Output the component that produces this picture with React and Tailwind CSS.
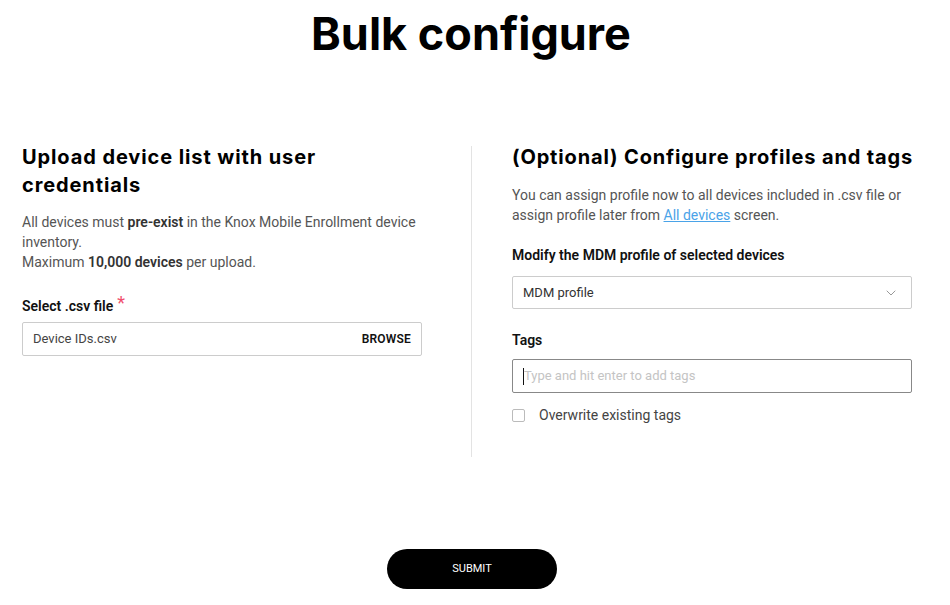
import { ChevronDown } from 'lucide-react';

const sharp = { fontFamily: '"Inter", "Lato", sans-serif' };

export default function App() {
  return (
    <div className="w-[950px] h-[605px] bg-white text-[#000] font-['Roboto',sans-serif] flex flex-col items-center">
      <h1 className="mt-[6px] mr-[8px] text-[45px] leading-[56px] font-bold tracking-[0px]" style={sharp}>
        Bulk configure
      </h1>

      <div className="mt-[81px] w-full pl-[22px] flex">
        {/* left column */}
        <div className="w-[400px] shrink-0 pb-[8px]">
          <h2 className="text-[20px] leading-[28px] font-bold tracking-[0.9px]" style={sharp}>
            Upload device list with user<br />credentials
          </h2>
          <p className="mt-[13px] text-[14px] leading-[20px] text-[#555]">
            All devices must <b className="font-semibold text-[#333]">pre-exist</b> in the Knox Mobile Enrollment device inventory.
            <br />
            Maximum <b className="font-semibold text-[#333]">10,000 devices</b> per upload.
          </p>
          <div className="mt-[24px] text-[14px] leading-[20px] font-semibold text-[#111] flex items-start">
            Select .csv file
            <span className="ml-[4px] text-[#f0506e] text-[18px] leading-[14px] font-normal">*</span>
          </div>
          <div className="mt-[6px] h-[34px] border border-[#ccc] rounded-[2px] flex items-center justify-between px-[10px]">
            <span className="text-[13px] text-[#444]">Device IDs.csv</span>
            <span className="text-[12px] font-semibold text-[#111] tracking-[0.2px]">BROWSE</span>
          </div>
        </div>

        {/* divider */}
        <div className="ml-[49px] mr-[40px] shrink-0 w-px bg-[#e3e3e3] mt-[3px] h-[311px]" />

        {/* right column */}
        <div className="w-[400px] shrink-0">
          <h2 className="text-[20px] leading-[28px] font-bold tracking-[0.85px] whitespace-nowrap" style={sharp}>
            (Optional) Configure profiles and tags
          </h2>
          <p className="mt-[14px] text-[14px] leading-[20px] text-[#555]">
            You can assign profile now to all devices included in .csv file or assign profile later from{' '}
            <a className="text-[#4aa3e8] underline">All devices</a> screen.
          </p>
          <div className="mt-[20px] text-[14px] leading-[20px] font-semibold text-[#111]">
            Modify the MDM profile of selected devices
          </div>
          <div className="mt-[11px] h-[33px] border border-[#ccc] rounded-[2px] flex items-center justify-between pl-[10px] pr-[12px]">
            <span className="text-[13px] text-[#333]">MDM profile</span>
            <ChevronDown className="w-[16px] h-[16px] text-[#888]" strokeWidth={1.3} />
          </div>
          <div className="mt-[21px] text-[14px] leading-[20px] font-semibold text-[#111]">Tags</div>
          <div className="mt-[9px] h-[34px] border border-[#888] rounded-[2px] flex items-center pl-[10px]">
            <span className="w-px h-[17px] bg-[#111]" />
            <span className="text-[13px] text-[#c4c4c4]">Type and hit enter to add tags</span>
          </div>
          <label className="mt-[12px] flex items-center">
            <span className="w-[13px] h-[13px] border border-[#bbb] rounded-[2px]" />
            <span className="ml-[14px] text-[14px] text-[#444]">Overwrite existing tags</span>
          </label>
        </div>
      </div>

      <button className="mt-[92px] ml-[-6px] w-[170px] h-[40px] rounded-full bg-black text-white text-[11px] font-normal">
        SUBMIT
      </button>
    </div>
  );
}
